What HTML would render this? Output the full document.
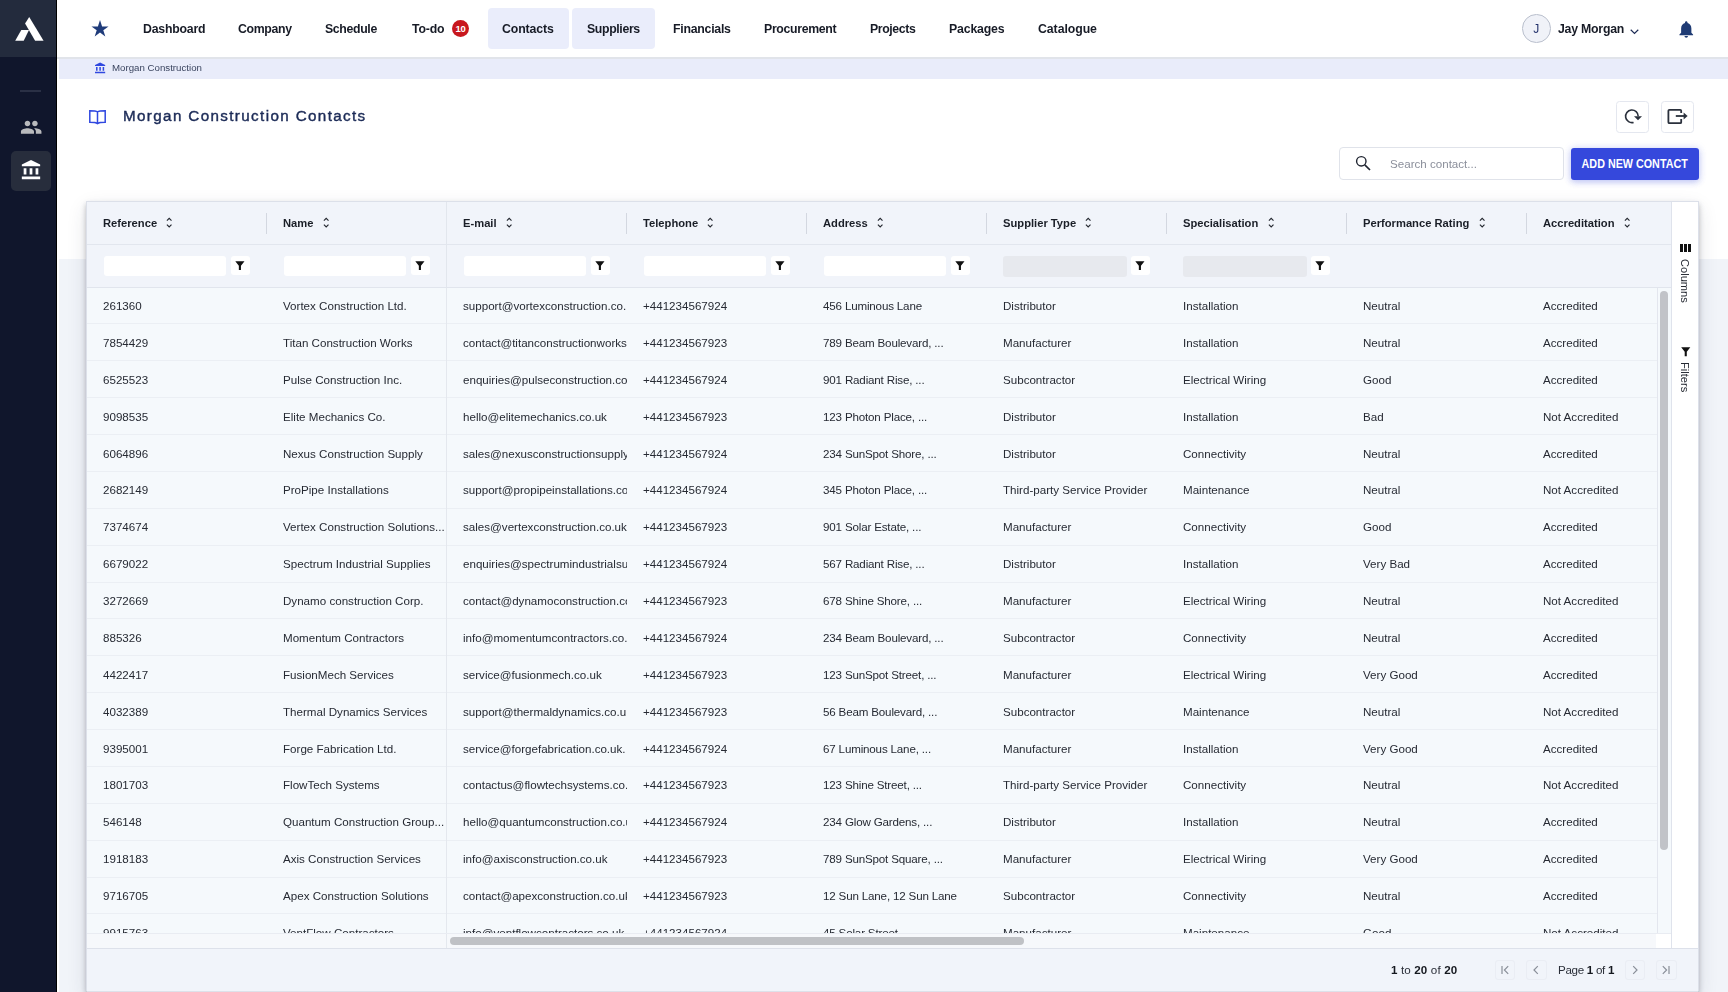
<!DOCTYPE html>
<html lang="en"><head><meta charset="utf-8"><title>Morgan Construction Contacts</title>
<style>
*{box-sizing:border-box;margin:0;padding:0}
html,body{width:1728px;height:992px;overflow:hidden}
body{position:relative;background:#fff;font-family:"Liberation Sans",sans-serif;color:#20242c;-webkit-font-smoothing:antialiased}
.whitezone{position:absolute;left:59px;top:259px;width:1669px;height:733px;background:#f1f4f9}
.side{position:absolute;left:0;top:0;width:57px;height:992px;background:#10162c;border-right:1px solid #000}
.logo{position:absolute;left:0;top:0;width:56px;height:57px;background:#232b3d}
.logo svg{display:block}
.sep{position:absolute;left:20px;top:90px;width:21px;height:2px;background:#2a3045}
.ppl{position:absolute;left:19.700px;top:116.300px;width:22.400px;height:22.400px}
.tile{position:absolute;left:11px;top:151px;width:40px;height:40px;border-radius:5px;background:#272d3c}
.tile svg{position:absolute;left:8.700px;top:8.300px;width:22px;height:22px}
.top{position:absolute;left:57px;top:0;width:1671px;height:59px;background:#fff;border-bottom:2px solid #e1e4ea}
.star{position:absolute;left:32.500px;top:19.400px}
.navtile{position:absolute;top:8px;height:41px;border-radius:4px;background:#eaedfb}
.nv{position:absolute;top:20.800px;height:17px;line-height:17px;font-size:12.300px;font-weight:700;color:#171b26;white-space:nowrap}
.nv span{display:inline-block}
.badge{position:absolute;left:394.700px;top:19.800px;width:17.600px;height:17.600px;border-radius:50%;background:#c8171e;color:#fff;font-size:9.500px;font-weight:700;line-height:17.600px;text-align:center;letter-spacing:-.3px}
.avatar{position:absolute;left:1464.800px;top:14.200px;width:28.600px;height:28.600px;border-radius:50%;background:#f0f2f8;border:1px solid #b9bfcc;color:#22306a;font-size:12px;line-height:28.600px;text-align:center}
.uname{position:absolute;left:1501.300px;top:20.800px;height:17px;line-height:17px;font-size:12.300px;font-weight:700;color:#171b26;white-space:nowrap}
.chev{position:absolute;left:1573.200px;top:29.400px}
.bell{position:absolute;left:1618.600px;top:18.600px}
.crumb{position:absolute;left:59px;top:59px;width:1669px;height:20px;background:#e9ecfa;font-size:9.700px;color:#3b4560;line-height:20px;white-space:nowrap}
.crumb svg{position:absolute;left:35.400px;top:2.700px;width:12.200px;height:12.200px}
.crumb span{position:absolute;left:52.500px;top:-1.200px}
.book{position:absolute;left:88.500px;top:110.300px}
.title{position:absolute;left:122.600px;top:104.400px;font-size:15.200px;line-height:24px;font-weight:400;letter-spacing:1.373px;-webkit-text-stroke:.42px #1c2b57;color:#1c2b57;white-space:nowrap}
.ibtn{position:absolute;top:101px;width:32.600px;height:32px;border:1px solid #e4e7ef;border-radius:3.500px;background:#fff}
.ibtn svg{position:absolute;left:-1.500px;top:-1px}
.search{position:absolute;left:1339px;top:147px;width:225px;height:33px;border:1px solid #e0e3ea;border-radius:4px;background:#fff}
.search svg{position:absolute;left:15.300px;top:7.300px}
.search span{position:absolute;left:50px;top:9px;font-size:11.600px;line-height:14px;color:#8b8f9b;white-space:nowrap}
.addbtn{position:absolute;left:1571px;top:148px;width:128px;height:32px;border-radius:3px;background:#3548dc;box-shadow:0 2px 6px rgba(53,72,220,.28),0 0 10px rgba(53,72,220,.12);color:#fff;font-size:12.300px;font-weight:700;line-height:32px;text-align:center;white-space:nowrap}
.addbtn span{display:inline-block;transform:scaleX(.875);transform-origin:50% 50%}
.grid{position:absolute;left:86px;top:201px;width:1613px;height:790px;background:#f5f9fc;border:1px solid #dce0e9;box-shadow:0 3px 5px rgba(30,34,46,.28),0 7px 18px rgba(40,48,70,.13)}
.hdr{position:absolute;left:0;top:0;width:1584px;height:43px;background:#f1f4fa;border-bottom:1px solid #e2e6ee;overflow:hidden}
.hc{position:absolute;top:0;height:42px;width:180px;padding-left:16px;white-space:nowrap;font-size:11.200px;font-weight:700;color:#1a1e27;line-height:43.400px}
.ht{display:inline-block;vertical-align:top}
.so{display:inline-block;width:6.400px;height:11.400px;margin-left:9.300px;vertical-align:top;margin-top:14.900px}
.hs{position:absolute;top:11px;width:1px;height:21px;background:#d3d7e0}
.flt{position:absolute;left:0;top:43px;width:1584px;height:43px;background:#f1f4fa;border-bottom:1px solid #e1e5ed;overflow:hidden}
.fi{position:absolute;top:11px;width:122.500px;height:20px;border-radius:3px;background:#fff}
.fi.dis{background:#e7e9ee;margin-left:-1px;margin-top:-.5px;width:124.500px;height:21px}
.fb{position:absolute;top:11px;width:19.200px;height:19px;border-radius:3px;background:#fff}
.fn{position:absolute;left:4.700px;top:4.800px;width:9.800px;height:9.600px}
.body{position:absolute;left:0;top:86px;width:1571px;height:645.400px;overflow:hidden;background:#f5f9fc;border-right:1px solid #e3e6ee}
.row{position:relative;height:36.880px;white-space:nowrap;width:1620px}
.c{position:absolute;top:0;width:180px;height:36px;line-height:36.500px;padding-left:16px;overflow:hidden;white-space:nowrap;font-size:11.600px;color:#262a33}
.pin{position:absolute;left:359px;top:0;width:1px;height:100%;background:#e4e8ee}
.vsb{position:absolute;left:1571px;top:86px;width:13px;height:645.400px;background:#f5f9fc}
.vsb i{position:absolute;left:2.200px;top:2.600px;width:7.600px;height:559px;border-radius:4px;background:#c1c3c8}
.hsb{position:absolute;left:0;top:731.400px;width:1584px;height:14.600px;background:#f6f8fb;border-top:1px solid #e9ecf2}
.hsb .th{position:absolute;left:362.500px;top:2.900px;width:574px;height:8.100px;border-radius:4px;background:#bfc1c5}
.hsb .pin2{position:absolute;left:359px;top:0;width:1px;height:100%;background:#e4e8ee}
.hsb b{position:absolute;right:0;top:0;width:15px;height:14.500px;background:#fff}
.sidebar2{position:absolute;left:1584px;top:0;width:27px;height:746px;background:#fff;border-left:1px solid #dfe3ec}
.ci{position:absolute;left:8.200px;top:42.200px}
.fi2{position:absolute;left:9.200px;top:145px}
.vt{position:absolute;left:6px;writing-mode:vertical-rl;font-size:11.100px;line-height:14px;color:#262a33;white-space:nowrap;width:14px}
.pag{position:absolute;left:0;top:746px;width:1611px;height:44px;background:#f1f4fa;border-top:1px solid #dde1ea;border-bottom:1px solid #dde1ea}
.pt{position:absolute;top:13.500px;font-size:11.600px;line-height:14px;color:#2a2e38;white-space:nowrap}
.pt b{font-weight:700;color:#15181f}
.pb{position:absolute;top:10.800px;width:20.500px;height:20px;border:1px solid #eaedf4;border-radius:3px}
.pb svg{position:absolute;left:-1px;top:-1px}
.c:nth-child(1){left:0px}.c:nth-child(2){left:180px}.c:nth-child(3){left:360px}.c:nth-child(4){left:540px}.c:nth-child(5){left:720px}.c:nth-child(6){left:900px}.c:nth-child(7){left:1080px}.c:nth-child(8){left:1260px}.c:nth-child(9){left:1440px}
.pinh{position:absolute;left:359px;top:0;width:1px;height:100%;background:#e2e6ed}
.row,.hc,.nv,.uname,.title,.crumb span,.pt,.vt,.search span,.avatar{will-change:transform}
.c:nth-child(5){letter-spacing:-.17px}
.rl{position:absolute;left:0;width:1570px;height:1px;background:#ebeff4}

</style></head><body>
<div class="whitezone"></div>
<aside class="side">
 <div class="logo"><svg width="56" height="57" viewBox="0 0 56 57"><polygon points="29.2,17 43.6,40.7 35.1,40.7 25.1,23.4" fill="#fff"/><polygon points="21.3,30.1 29.0,30.1 23.7,40.7 15.2,40.7" fill="#fff"/></svg></div>
 <div class="sep"></div>
 <svg class="ppl" viewBox="0 0 24 24" width="24" height="24"><path fill="#b9babd" d="M16 11c1.66 0 2.99-1.34 2.99-3S17.66 5 16 5c-1.66 0-3 1.34-3 3s1.34 3 3 3zm-8 0c1.66 0 2.99-1.34 2.99-3S9.66 5 8 5C6.34 5 5 6.34 5 8s1.340 3 3 3zm0 2c-2.33 0-7 1.17-7 3.500V19h14v-2.500c0-2.330-4.670-3.500-7-3.500zm8 0c-.29 0-.62.020-.97.050 1.160.84 1.970 1.970 1.970 3.450V19h6v-2.500c0-2.330-4.670-3.500-7-3.500z"/></svg>
 <div class="tile"><svg viewBox="0 0 24 24" width="24" height="24"><path fill="#fff" d="M4 10h3v7H4zM10.500 10h3v7h-3zM2 19h20v3H2zM17 10h3v7h-3zM12 1L2 6v2h20V6z"/></svg></div>
</aside>
<header class="top">
<svg class="star" viewBox="0 0 20 20" width="20" height="20"><polygon fill="#1f3b7a" points="10,1.1 12.100,7.400 18.500,7.400 13.300,11.200 15.300,17.400 10,13.600 4.700,17.400 6.700,11.200 1.500,7.400 7.900,7.400"/></svg>
<div class="navtile" style="left:430.5px;width:81.1px"></div><div class="navtile" style="left:515.3px;width:82.5px"></div><a class="nv" style="left:85.5px;letter-spacing:-0.22px">Dashboard</a><a class="nv" style="left:181.0px;letter-spacing:-0.34px">Company</a><a class="nv" style="left:268.4px;letter-spacing:-0.34px">Schedule</a><a class="nv" style="left:354.5px;letter-spacing:-0.18px">To-do</a><a class="nv" style="left:445.2px;letter-spacing:-0.12px">Contacts</a><a class="nv" style="left:530.0px;letter-spacing:-0.36px">Suppliers</a><a class="nv" style="left:616.3px;letter-spacing:-0.25px">Financials</a><a class="nv" style="left:707.3px;letter-spacing:-0.32px">Procurement</a><a class="nv" style="left:813.2px;letter-spacing:-0.39px">Projects</a><a class="nv" style="left:892.0px;letter-spacing:-0.16px">Packages</a><a class="nv" style="left:980.5px;letter-spacing:-0.06px">Catalogue</a><span class="badge">10</span>
<div class="avatar">J</div><div class="uname" style="letter-spacing:-0.22px">Jay Morgan</div>
<svg class="chev" viewBox="0 0 10 6" width="9" height="5.400"><path d="M0.800 0.800L5 5l4.200-4.200" fill="none" stroke="#1d2b55" stroke-width="1.300"/></svg>
<svg class="bell" viewBox="0 0 24 24" width="20.500" height="20.500"><path fill="#1f3b74" d="M12 22c1.100 0 2-.9 2-2h-4c0 1.100.89 2 2 2zm6-6v-5c0-3.070-1.640-5.640-4.500-6.320V4c0-.83-.67-1.500-1.500-1.500s-1.500.67-1.500 1.500v.68C7.630 5.360 6 7.920 6 11v5l-2 2v1h16v-1l-2-2z"/></svg>
</header>
<div class="crumb"><svg viewBox="0 0 24 24" width="12.600" height="12.600"><path fill="#3048e0" d="M4 10h3v7H4zM10.500 10h3v7h-3zM2 19h20v3H2zM17 10h3v7h-3zM12 1L2 6v2h20V6z"/></svg><span>Morgan Construction</span></div>
<svg class="book" viewBox="0 0 17 15" width="17" height="15"><path d="M8.500 1.900C7 0.900 4 0.800 0.800 0.800V12.300C4 12.300 7 12.400 8.500 13.600C10 12.400 13 12.300 16.200 12.300V0.800C13 0.800 10 0.900 8.500 1.900V13.600" fill="none" stroke="#3048e0" stroke-width="1.500" stroke-linejoin="miter"/></svg>
<h1 class="title"><span>Morgan Construction Contacts</span></h1>
<div class="ibtn" style="left:1616.300px"><svg viewBox="0 0 32 32" width="32" height="32"><path d="M22.200 15.300A6.300 6.300 0 1 0 17.600 21.400" fill="none" stroke="#2a303c" stroke-width="1.600"/><polygon points="18,15.300 26,15.300 22,19.300" fill="#2a303c"/></svg></div>
<div class="ibtn" style="left:1661.300px"><svg viewBox="0 0 32 32" width="32" height="32"><path d="M20.200 12V9.800a1 1 0 0 0-1-1H8.400a1 1 0 0 0-1 1v11.400a1 1 0 0 0 1 1h10.800a1 1 0 0 0 1-1V18" fill="none" stroke="#2a303c" stroke-width="1.800"/><path d="M14.800 15h10" stroke="#2a303c" stroke-width="1.800" fill="none"/><polygon points="22.600,11.500 26.600,15 22.600,18.500" fill="#2a303c"/></svg></div>
<div class="search"><svg viewBox="0 0 16 16" width="16" height="16"><circle cx="6.300" cy="6.300" r="4.700" fill="none" stroke="#1f2430" stroke-width="1.400"/><path d="M9.800 9.800L15 15" stroke="#1f2430" stroke-width="1.700"/></svg><span>Search contact...</span></div>
<div class="addbtn"><span>ADD NEW CONTACT</span></div>
<section class="grid">
<div class="hdr"><div class="hc" style="left:0px"><span class="ht">Reference</span><svg class="so" viewBox="0 0 6.400 11.400"><path d="M0.900 3.700L3.200 1.400l2.300 2.300M0.900 7.700L3.200 10l2.300-2.300" fill="none" stroke="#23272f" stroke-width="1.150"/></svg></div><div class="hc" style="left:180px"><span class="ht">Name</span><svg class="so" viewBox="0 0 6.400 11.400"><path d="M0.900 3.700L3.200 1.400l2.300 2.300M0.900 7.700L3.200 10l2.300-2.300" fill="none" stroke="#23272f" stroke-width="1.150"/></svg></div><i class="hs" style="left:179px"></i><div class="hc" style="left:360px"><span class="ht">E-mail</span><svg class="so" viewBox="0 0 6.400 11.400"><path d="M0.900 3.700L3.200 1.400l2.300 2.300M0.900 7.700L3.200 10l2.300-2.300" fill="none" stroke="#23272f" stroke-width="1.150"/></svg></div><i class="hs" style="left:359px"></i><div class="hc" style="left:540px"><span class="ht">Telephone</span><svg class="so" viewBox="0 0 6.400 11.400"><path d="M0.900 3.700L3.200 1.400l2.300 2.300M0.900 7.700L3.200 10l2.300-2.300" fill="none" stroke="#23272f" stroke-width="1.150"/></svg></div><i class="hs" style="left:539px"></i><div class="hc" style="left:720px"><span class="ht">Address</span><svg class="so" viewBox="0 0 6.400 11.400"><path d="M0.900 3.700L3.200 1.400l2.300 2.300M0.900 7.700L3.200 10l2.300-2.300" fill="none" stroke="#23272f" stroke-width="1.150"/></svg></div><i class="hs" style="left:719px"></i><div class="hc" style="left:900px"><span class="ht">Supplier Type</span><svg class="so" viewBox="0 0 6.400 11.400"><path d="M0.900 3.700L3.200 1.400l2.300 2.300M0.900 7.700L3.200 10l2.300-2.300" fill="none" stroke="#23272f" stroke-width="1.150"/></svg></div><i class="hs" style="left:899px"></i><div class="hc" style="left:1080px"><span class="ht">Specialisation</span><svg class="so" viewBox="0 0 6.400 11.400"><path d="M0.900 3.700L3.200 1.400l2.300 2.300M0.900 7.700L3.200 10l2.300-2.300" fill="none" stroke="#23272f" stroke-width="1.150"/></svg></div><i class="hs" style="left:1079px"></i><div class="hc" style="left:1260px"><span class="ht">Performance Rating</span><svg class="so" viewBox="0 0 6.400 11.400"><path d="M0.900 3.700L3.200 1.400l2.300 2.300M0.900 7.700L3.200 10l2.300-2.300" fill="none" stroke="#23272f" stroke-width="1.150"/></svg></div><i class="hs" style="left:1259px"></i><div class="hc" style="left:1440px"><span class="ht">Accreditation</span><svg class="so" viewBox="0 0 6.400 11.400"><path d="M0.900 3.700L3.200 1.400l2.300 2.300M0.900 7.700L3.200 10l2.300-2.300" fill="none" stroke="#23272f" stroke-width="1.150"/></svg></div><i class="hs" style="left:1439px"></i><i class="pinh"></i></div>
<div class="flt"><i class="pinh"></i><div class="fi" style="left:16.5px"></div><div class="fb" style="left:143.8px"><svg class="fn" viewBox="0 0 10 10"><path d="M0.2 0.3h9.6L6.1 4.9V9.7H3.9V4.9z" fill="#111"/></svg></div><div class="fi" style="left:196.5px"></div><div class="fb" style="left:323.8px"><svg class="fn" viewBox="0 0 10 10"><path d="M0.2 0.3h9.6L6.1 4.9V9.7H3.9V4.9z" fill="#111"/></svg></div><div class="fi" style="left:376.5px"></div><div class="fb" style="left:503.8px"><svg class="fn" viewBox="0 0 10 10"><path d="M0.2 0.3h9.6L6.1 4.9V9.7H3.9V4.9z" fill="#111"/></svg></div><div class="fi" style="left:556.5px"></div><div class="fb" style="left:683.8px"><svg class="fn" viewBox="0 0 10 10"><path d="M0.2 0.3h9.6L6.1 4.9V9.7H3.9V4.9z" fill="#111"/></svg></div><div class="fi" style="left:736.5px"></div><div class="fb" style="left:863.8px"><svg class="fn" viewBox="0 0 10 10"><path d="M0.2 0.3h9.6L6.1 4.9V9.7H3.9V4.9z" fill="#111"/></svg></div><div class="fi dis" style="left:916.5px"></div><div class="fb" style="left:1043.8px"><svg class="fn" viewBox="0 0 10 10"><path d="M0.2 0.3h9.6L6.1 4.9V9.7H3.9V4.9z" fill="#111"/></svg></div><div class="fi dis" style="left:1096.5px"></div><div class="fb" style="left:1223.8px"><svg class="fn" viewBox="0 0 10 10"><path d="M0.2 0.3h9.6L6.1 4.9V9.7H3.9V4.9z" fill="#111"/></svg></div></div>
<div class="body">
<div class="row"><div class="c">261360</div><div class="c">Vortex Construction Ltd.</div><div class="c">support@vortexconstruction.co.uk</div><div class="c">+441234567924</div><div class="c">456 Luminous Lane</div><div class="c">Distributor</div><div class="c">Installation</div><div class="c">Neutral</div><div class="c">Accredited</div></div>
<div class="row"><div class="c">7854429</div><div class="c">Titan Construction Works</div><div class="c">contact@titanconstructionworks.co.uk</div><div class="c">+441234567923</div><div class="c">789 Beam Boulevard, ...</div><div class="c">Manufacturer</div><div class="c">Installation</div><div class="c">Neutral</div><div class="c">Accredited</div></div>
<div class="row"><div class="c">6525523</div><div class="c">Pulse Construction Inc.</div><div class="c">enquiries@pulseconstruction.co.uk</div><div class="c">+441234567924</div><div class="c">901 Radiant Rise, ...</div><div class="c">Subcontractor</div><div class="c">Electrical Wiring</div><div class="c">Good</div><div class="c">Accredited</div></div>
<div class="row"><div class="c">9098535</div><div class="c">Elite Mechanics Co.</div><div class="c">hello@elitemechanics.co.uk</div><div class="c">+441234567923</div><div class="c">123 Photon Place, ...</div><div class="c">Distributor</div><div class="c">Installation</div><div class="c">Bad</div><div class="c">Not Accredited</div></div>
<div class="row"><div class="c">6064896</div><div class="c">Nexus Construction Supply</div><div class="c">sales@nexusconstructionsupply.co.uk</div><div class="c">+441234567924</div><div class="c">234 SunSpot Shore, ...</div><div class="c">Distributor</div><div class="c">Connectivity</div><div class="c">Neutral</div><div class="c">Accredited</div></div>
<div class="row"><div class="c">2682149</div><div class="c">ProPipe Installations</div><div class="c">support@propipeinstallations.co.uk</div><div class="c">+441234567924</div><div class="c">345 Photon Place, ...</div><div class="c">Third-party Service Provider</div><div class="c">Maintenance</div><div class="c">Neutral</div><div class="c">Not Accredited</div></div>
<div class="row"><div class="c">7374674</div><div class="c">Vertex Construction Solutions...</div><div class="c">sales@vertexconstruction.co.uk</div><div class="c">+441234567923</div><div class="c">901 Solar Estate, ...</div><div class="c">Manufacturer</div><div class="c">Connectivity</div><div class="c">Good</div><div class="c">Accredited</div></div>
<div class="row"><div class="c">6679022</div><div class="c">Spectrum Industrial Supplies</div><div class="c">enquiries@spectrumindustrialsupplies.co.uk</div><div class="c">+441234567924</div><div class="c">567 Radiant Rise, ...</div><div class="c">Distributor</div><div class="c">Installation</div><div class="c">Very Bad</div><div class="c">Accredited</div></div>
<div class="row"><div class="c">3272669</div><div class="c">Dynamo construction Corp.</div><div class="c">contact@dynamoconstruction.co.uk</div><div class="c">+441234567923</div><div class="c">678 Shine Shore, ...</div><div class="c">Manufacturer</div><div class="c">Electrical Wiring</div><div class="c">Neutral</div><div class="c">Not Accredited</div></div>
<div class="row"><div class="c">885326</div><div class="c">Momentum Contractors</div><div class="c">info@momentumcontractors.co.uk</div><div class="c">+441234567924</div><div class="c">234 Beam Boulevard, ...</div><div class="c">Subcontractor</div><div class="c">Connectivity</div><div class="c">Neutral</div><div class="c">Accredited</div></div>
<div class="row"><div class="c">4422417</div><div class="c">FusionMech Services</div><div class="c">service@fusionmech.co.uk</div><div class="c">+441234567923</div><div class="c">123 SunSpot Street, ...</div><div class="c">Manufacturer</div><div class="c">Electrical Wiring</div><div class="c">Very Good</div><div class="c">Accredited</div></div>
<div class="row"><div class="c">4032389</div><div class="c">Thermal Dynamics Services</div><div class="c">support@thermaldynamics.co.uk</div><div class="c">+441234567923</div><div class="c">56 Beam Boulevard, ...</div><div class="c">Subcontractor</div><div class="c">Maintenance</div><div class="c">Neutral</div><div class="c">Not Accredited</div></div>
<div class="row"><div class="c">9395001</div><div class="c">Forge Fabrication Ltd.</div><div class="c">service@forgefabrication.co.uk.</div><div class="c">+441234567924</div><div class="c">67 Luminous Lane, ...</div><div class="c">Manufacturer</div><div class="c">Installation</div><div class="c">Very Good</div><div class="c">Accredited</div></div>
<div class="row"><div class="c">1801703</div><div class="c">FlowTech Systems</div><div class="c">contactus@flowtechsystems.co.uk</div><div class="c">+441234567923</div><div class="c">123 Shine Street, ...</div><div class="c">Third-party Service Provider</div><div class="c">Connectivity</div><div class="c">Neutral</div><div class="c">Not Accredited</div></div>
<div class="row"><div class="c">546148</div><div class="c">Quantum Construction Group...</div><div class="c">hello@quantumconstruction.co.uk</div><div class="c">+441234567924</div><div class="c">234 Glow Gardens, ...</div><div class="c">Distributor</div><div class="c">Installation</div><div class="c">Neutral</div><div class="c">Accredited</div></div>
<div class="row"><div class="c">1918183</div><div class="c">Axis Construction Services</div><div class="c">info@axisconstruction.co.uk</div><div class="c">+441234567923</div><div class="c">789 SunSpot Square, ...</div><div class="c">Manufacturer</div><div class="c">Electrical Wiring</div><div class="c">Very Good</div><div class="c">Accredited</div></div>
<div class="row"><div class="c">9716705</div><div class="c">Apex Construction Solutions</div><div class="c">contact@apexconstruction.co.uk</div><div class="c">+441234567923</div><div class="c">12 Sun Lane, 12 Sun Lane</div><div class="c">Subcontractor</div><div class="c">Connectivity</div><div class="c">Neutral</div><div class="c">Accredited</div></div>
<div class="row"><div class="c">9915763</div><div class="c">VentFlow Contractors</div><div class="c">info@ventflowcontractors.co.uk</div><div class="c">+441234567924</div><div class="c">45 Solar Street</div><div class="c">Manufacturer</div><div class="c">Maintenance</div><div class="c">Good</div><div class="c">Not Accredited</div></div>
<i class="rl" style="top:35.38px"></i><i class="rl" style="top:72.26px"></i><i class="rl" style="top:109.14px"></i><i class="rl" style="top:146.02px"></i><i class="rl" style="top:182.90px"></i><i class="rl" style="top:219.78px"></i><i class="rl" style="top:256.66px"></i><i class="rl" style="top:293.54px"></i><i class="rl" style="top:330.42px"></i><i class="rl" style="top:367.30px"></i><i class="rl" style="top:404.18px"></i><i class="rl" style="top:441.06px"></i><i class="rl" style="top:477.94px"></i><i class="rl" style="top:514.82px"></i><i class="rl" style="top:551.70px"></i><i class="rl" style="top:588.58px"></i><i class="rl" style="top:625.46px"></i><i class="rl" style="top:662.34px"></i><i class="pin"></i></div>
<div class="vsb"><i></i></div>
<div class="hsb"><i class="pin2"></i><i class="th"></i><b></b></div>
<div class="sidebar2">
<svg class="ci" viewBox="0 0 11 8" width="11" height="8"><path d="M0 0h3v8H0zM4 0h3v8H4zM8 0h3v8H8z" fill="#111"/></svg>
<span class="vt" style="top:57px">Columns</span>
<svg class="fi2" viewBox="0 0 10 10" width="9.500" height="9.500"><path d="M0.200 0.300h9.600L6.100 4.900V9.700H3.900V4.900z" fill="#111"/></svg>
<span class="vt" style="top:160px">Filters</span>
</div>
<div class="pag">
<span class="pt" style="left:1303.500px;letter-spacing:.14px"><b>1</b> to <b>20</b> of <b>20</b></span>
<div class="pb" style="left:1407.700px"><svg viewBox="0 0 20 20" width="20" height="20"><path d="M7 6v8M13.200 6.200L9.400 10l3.800 3.800" fill="none" stroke="#8a8f99" stroke-width="1.200"/></svg></div>
<div class="pb" style="left:1439.300px"><svg viewBox="0 0 20 20" width="20" height="20"><path d="M11.800 6.200L8 10l3.800 3.800" fill="none" stroke="#8a8f99" stroke-width="1.200"/></svg></div>
<span class="pt" style="left:1471px;letter-spacing:-.3px">Page <b>1</b> of <b>1</b></span>
<div class="pb" style="left:1537.700px"><svg viewBox="0 0 20 20" width="20" height="20"><path d="M8.200 6.200L12 10l-3.800 3.800" fill="none" stroke="#8a8f99" stroke-width="1.200"/></svg></div>
<div class="pb" style="left:1569px"><svg viewBox="0 0 20 20" width="20" height="20"><path d="M13 6v8M6.800 6.200L10.600 10l-3.800 3.800" fill="none" stroke="#8a8f99" stroke-width="1.200"/></svg></div>
</div>
</section>
</body></html>
